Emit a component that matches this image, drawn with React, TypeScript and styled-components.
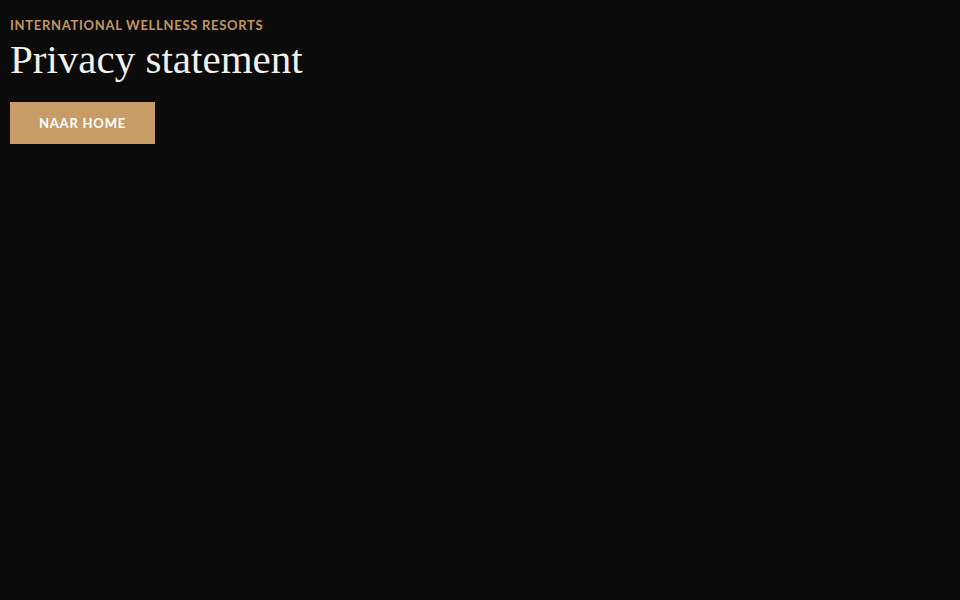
import React from 'react'
import styled, { createGlobalStyle } from 'styled-components'

const GlobalStyle = createGlobalStyle`
  html, body {
    margin: 0;
    padding: 0;
    background: #0b0b0b;
  }
  body {
    font-family: 'Lato', 'Liberation Sans', sans-serif;
  }
`

const Page = styled.main`
  min-height: 600px;
  box-sizing: border-box;
  padding: 17px 10px 0;
  background: #0b0b0b;
  display: flex;
  flex-direction: column;
  align-items: flex-start;
`

const Eyebrow = styled.div`
  font-family: 'Lato', 'Liberation Sans', sans-serif;
  font-size: 13px;
  font-weight: 700;
  letter-spacing: 0.7px;
  text-transform: uppercase;
  color: #c3965f;
  line-height: 16px;
`

const Title = styled.h1`
  margin: 3px 0 0;
  font-family: 'Liberation Serif', serif;
  font-weight: 400;
  font-size: 41px;
  line-height: 46px;
  color: #f2f0ec;
`

const HomeButton = styled.a`
  margin-top: 20px;
  width: 145px;
  height: 42px;
  display: flex;
  align-items: center;
  justify-content: center;
  background: #c89c67;
  color: #ffffff;
  font-family: 'Lato', 'Liberation Sans', sans-serif;
  font-size: 13px;
  font-weight: 700;
  letter-spacing: 0.8px;
  text-transform: uppercase;
  text-decoration: none;
`

const App = () => {
  return (
    <>
      <GlobalStyle />
      <Page>
        <Eyebrow>International Wellness Resorts</Eyebrow>
        <Title>Privacy statement</Title>
        <HomeButton href="#">Naar home</HomeButton>
      </Page>
    </>
  )
}

export default App
